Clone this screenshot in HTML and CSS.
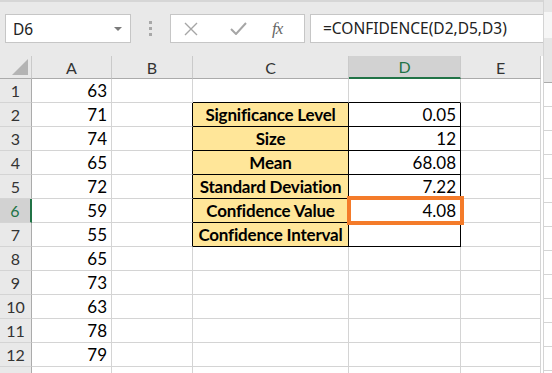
FILE: index.html
```html
<!DOCTYPE html>
<html lang="en">

<head>
    <meta charset="UTF-8">
    <title>CONFIDENCE</title>
    <link rel="stylesheet" href="styles.css">
</head>

<body>
    <div class="window">
        <div class="main">
            <!-- formula bar -->
            <div class="toolbar">
                <div class="name-box">
                    <span>D6</span>
                    <i class="arrow"></i>
                </div>
                <div class="grip"><i></i><i></i><i></i></div>
                <div class="fx-buttons">
                    <svg class="cancel" width="14" height="14" viewBox="0 0 14 14">
                        <path d="M1 1 L13 13 M13 1 L1 13" stroke="#a6a6a6" stroke-width="1.4" fill="none" />
                    </svg>
                    <svg class="enter" width="17" height="13" viewBox="0 0 17 13">
                        <path d="M1 7 L6 12 L16 1" stroke="#a6a6a6" stroke-width="2" fill="none" />
                    </svg>
                    <span class="fx">fx</span>
                </div>
                <div class="formula">=CONFIDENCE(D2,D5,D3)</div>
            </div>

            <!-- sheet -->
            <table class="grid">
                <colgroup>
                    <col class="c-head">
                    <col class="c-a">
                    <col class="c-b">
                    <col class="c-c">
                    <col class="c-d">
                    <col class="c-e">
                </colgroup>
                <thead>
                    <tr>
                        <th class="corner"><i></i></th>
                        <th>A</th>
                        <th>B</th>
                        <th>C</th>
                        <th class="active-col">D</th>
                        <th>E</th>
                    </tr>
                </thead>
                <tbody>
                    <tr>
                        <th>1</th><td class="num">63</td><td></td><td class="above"></td><td class="above"></td><td></td>
                    </tr>
                    <tr>
                        <th>2</th><td class="num">71</td><td class="before"></td><td class="label">Significance Level</td><td class="num box">0.05</td><td></td>
                    </tr>
                    <tr>
                        <th>3</th><td class="num">74</td><td class="before"></td><td class="label">Size</td><td class="num box">12</td><td></td>
                    </tr>
                    <tr>
                        <th>4</th><td class="num">65</td><td class="before"></td><td class="label">Mean</td><td class="num box">68.08</td><td></td>
                    </tr>
                    <tr>
                        <th>5</th><td class="num">72</td><td class="before"></td><td class="label">Standard Deviation</td><td class="num box">7.22</td><td></td>
                    </tr>
                    <tr>
                        <th class="active-row">6</th><td class="num">59</td><td class="before"></td><td class="label">Confidence Value</td><td class="num box picked">4.08</td><td></td>
                    </tr>
                    <tr>
                        <th>7</th><td class="num">55</td><td class="before"></td><td class="label">Confidence Interval</td><td class="num box"></td><td></td>
                    </tr>
                    <tr>
                        <th>8</th><td class="num">65</td><td></td><td></td><td></td><td></td>
                    </tr>
                    <tr>
                        <th>9</th><td class="num">73</td><td></td><td></td><td></td><td></td>
                    </tr>
                    <tr>
                        <th>10</th><td class="num">63</td><td></td><td></td><td></td><td></td>
                    </tr>
                    <tr>
                        <th>11</th><td class="num">78</td><td></td><td></td><td></td><td></td>
                    </tr>
                    <tr>
                        <th>12</th><td class="num">79</td><td></td><td></td><td></td><td></td>
                    </tr>
                    <tr>
                        <th></th><td></td><td></td><td></td><td></td><td></td>
                    </tr>
                </tbody>
            </table>
        </div>

        <!-- right edge of the next pane -->
        <div class="edge">
            <div class="edge-top"></div>
            <div class="edge-head"></div>
            <div class="edge-rows"></div>
        </div>
    </div>
</body>

</html>
```

FILE: styles.css
```css
* {
    padding: 0;
    margin: 0;
    box-sizing: border-box;
}

body {
    width: 552px;
    height: 373px;
    overflow: hidden;
    background-color: #fff;
    font-family: Lato, "Liberation Sans", sans-serif;
}

.window {
    display: flex;
    height: 373px;
}

.main {
    width: 543px;
}

/* formula bar */
.toolbar {
    height: 56px;
    background-color: #e9e9e9;
    border-top: 2px solid #d6d6d6;
    display: flex;
    align-items: flex-start;
    padding-top: 12px;
    padding-left: 5px;
}

.name-box {
    width: 126px;
    height: 29px;
    background-color: #fff;
    border: 1px solid #c6c6c6;
    display: flex;
    align-items: center;
    justify-content: space-between;
    padding: 0 8px 0 7px;
    font-family: "Noto Sans", sans-serif;
    font-size: 15.5px;
    color: #222;
}

.name-box .arrow {
    display: block;
    width: 0;
    height: 0;
    border-left: 4px solid transparent;
    border-right: 4px solid transparent;
    border-top: 4px solid #7a7a7a;
}

.grip {
    width: 39px;
    height: 29px;
    display: flex;
    flex-direction: column;
    align-items: center;
    justify-content: center;
    gap: 3px;
}

.grip i {
    display: block;
    width: 3px;
    height: 3px;
    background-color: #a8a8a8;
}

.fx-buttons {
    width: 135px;
    height: 29px;
    background-color: #fff;
    border: 1px solid #c6c6c6;
    display: flex;
    align-items: center;
    padding-left: 13px;
}

.fx-buttons .enter {
    margin-left: 32px;
}

.fx-buttons .fx {
    margin-left: 25px;
    font-family: "Liberation Serif", serif;
    font-style: italic;
    font-size: 17px;
    color: #666;
    letter-spacing: -1px;
}

.formula {
    flex: 1;
    margin-left: 5px;
    height: 29px;
    background-color: #fff;
    border: 1px solid #c6c6c6;
    border-right: 0;
    padding-left: 12px;
    line-height: 27px;
    font-family: "Noto Sans", sans-serif;
    font-size: 15.5px;
    color: #222;
}

/* sheet */
.grid {
    border-collapse: separate;
    border-spacing: 0;
    table-layout: fixed;
    width: 541px;
    font-size: 17px;
}

.c-head { width: 32px; }
.c-a { width: 80px; }
.c-b { width: 81px; }
.c-c { width: 156px; }
.c-d { width: 112px; }
.c-e { width: 80px; }

.grid thead tr {
    height: 23px;
}

.grid tbody tr {
    height: 24px;
}

.grid th {
    background-color: #e9e9e9;
    font-weight: normal;
    font-size: 16px;
    color: #333;
    text-align: center;
    padding: 0;
}

.grid thead th {
    border-right: 1px solid #cacaca;
    border-bottom: 1px solid #ababab;
}

.grid tbody th {
    border-bottom: 1px solid #d4d4d4;
    border-right: 1px solid #ababab;
}

.grid td {
    border-right: 1px solid #d4d4d4;
    border-bottom: 1px solid #d4d4d4;
    padding: 0 4px;
    color: #000;
    white-space: nowrap;
}

.grid .corner {
    position: relative;
}

.grid .corner i {
    position: absolute;
    right: 3px;
    bottom: 3px;
    width: 0;
    height: 0;
    border-left: 16px solid transparent;
    border-bottom: 16px solid #b4b4b4;
}

.grid .active-col {
    background-color: #d2d2d2;
    color: #217346;
    border-bottom: 2px solid #217346;
}

.grid .active-row {
    background-color: #d2d2d2;
    color: #217346;
    border-right: 2px solid #217346;
}

.num {
    text-align: right;
}

.label {
    background-color: #ffe699;
    font-weight: bold;
    text-align: center;
    letter-spacing: -0.2px;
    border-right: 1px solid #000 !important;
    border-bottom: 1px solid #000 !important;
}

.box {
    border-right: 1px solid #000 !important;
    border-bottom: 1px solid #000 !important;
}

.above {
    border-bottom: 1px solid #000 !important;
}

.before {
    border-right: 1px solid #000 !important;
}

.picked {
    position: relative;
}

.picked::after {
    content: "";
    position: absolute;
    left: -2px;
    right: -4px;
    top: -3px;
    bottom: -3px;
    border: 4px solid #f47b2a;
}

/* right pane edge */
.edge {
    width: 9px;
    border-left: 1px solid #d4d4d4;
}

.edge-top {
    height: 12px;
    background-color: #e6e6e6;
}

.edge-head {
    height: 71px;
    background: linear-gradient(#f6f6f6 0, #f6f6f6 26px, #e6e6e6 26px);
    border-bottom: 1px solid #ababab;
}

.edge-rows {
    height: 290px;
    background: repeating-linear-gradient(#fff 0, #fff 23px, #d4d4d4 23px, #d4d4d4 24px);
}
```
